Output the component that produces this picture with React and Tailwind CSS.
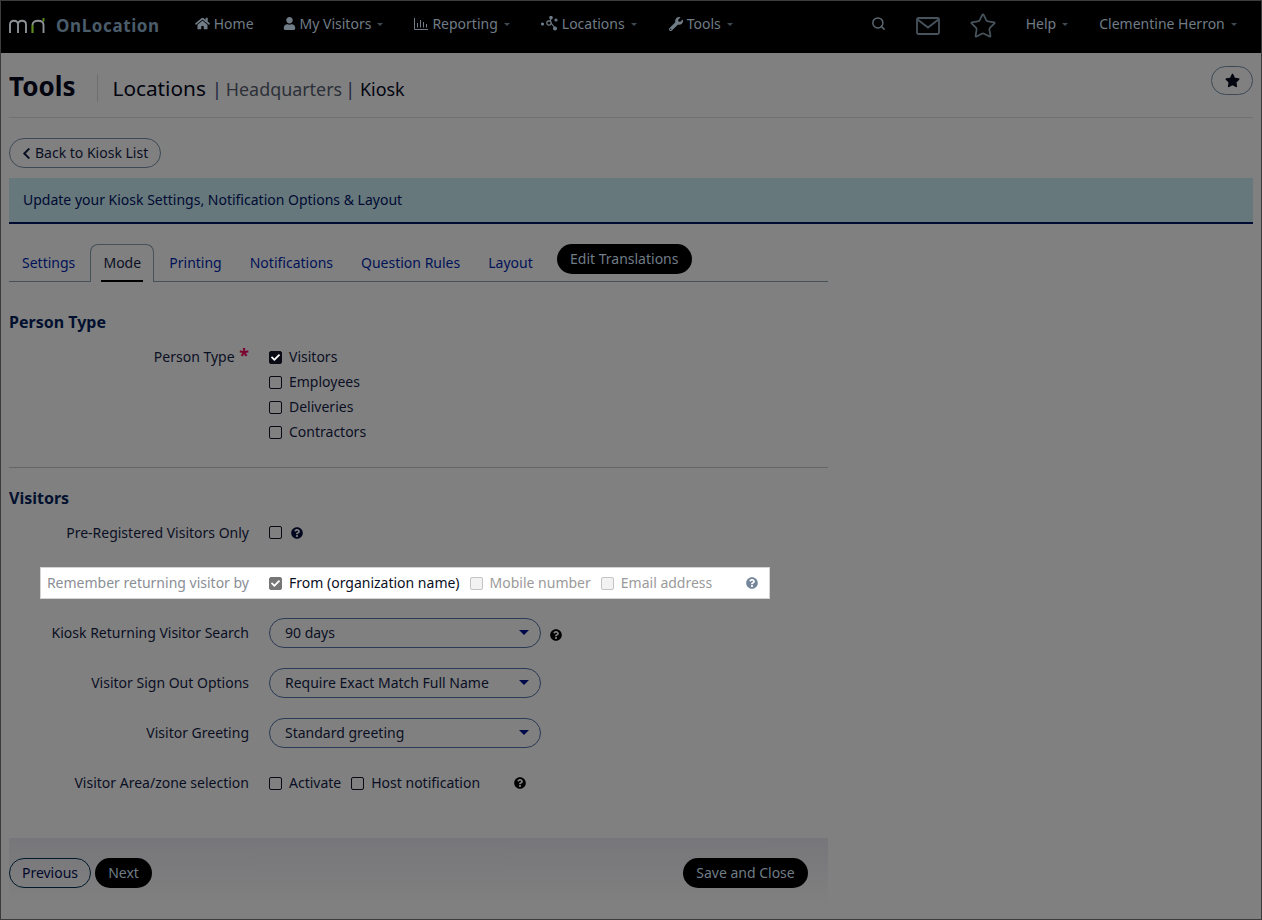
import { FaHome, FaUser, FaWrench, FaStar, FaQuestionCircle, FaChevronLeft, FaCheck } from 'react-icons/fa';
import { Search, Star } from 'lucide-react';

const Caret = () => (
  <span className="inline-block ml-[6px] mt-[2px] w-0 h-0 border-x-[3.5px] border-x-transparent border-t-[3.5px] border-t-[#3f4a53]" />
);

const MriLogo = () => (
  <svg width="37" height="16" viewBox="0 0 37 16" fill="none" strokeWidth="1.9" className="mb-[1px]">
    <path d="M1 15V6.5C1 4 2.5 2.8 5 2.8C7.5 2.8 9 4 9 6.5V15M9 6.5C9 4 10.5 2.8 13 2.8C15.5 2.8 17 4 17 6.5V15" stroke="#8c9195" />
    <path d="M23.5 15V7" stroke="#5f8a1e" strokeWidth="2.2" />
    <path d="M23.5 7C23.5 4 26 2.8 29 2.8C32 2.8 34.5 4 34.5 7V15" stroke="#8c9195" />
    <path d="M34.5 3.5V0" stroke="#5f8a1e" />
  </svg>
);

const LocationsIcon = () => (
  <svg width="17" height="15" viewBox="0 0 17 15" fill="none" stroke="#6f7c87" strokeWidth="1.2">
    <circle cx="1.5" cy="8" r="1" fill="#6f7c87" />
    <circle cx="8" cy="7" r="2.2" />
    <circle cx="10" cy="1.7" r="1.2" fill="#6f7c87" />
    <circle cx="15" cy="4" r="1" fill="#6f7c87" />
    <circle cx="14" cy="12.5" r="1.4" fill="#6f7c87" />
    <path d="M10 7L14 12M9 5L10 3" />
  </svg>
);

const ReportingIcon = () => (
  <svg width="14" height="12" viewBox="0 0 14 12" fill="none" stroke="#6f7c87" strokeWidth="1">
    <path d="M0.5 0V11.5H14" />
    <path d="M3.5 9.5V5M6.5 9.5V2M9.5 9.5V4M12.5 9.5V6" />
  </svg>
);

const MailIcon = () => (
  <svg width="24" height="18" viewBox="0 0 24 18" fill="none" stroke="#47535d" strokeWidth="1.8" className="ml-[30px]">
    <rect x="1" y="1" width="22" height="16" rx="1.5" />
    <path d="M1.5 2.5L12 10.5L22.5 2.5" />
  </svg>
);

const Check = ({ checked, muted }) => (
  <span className={`w-[13px] h-[13px] rounded-[2px] border flex items-center justify-center shrink-0 ${checked ? (muted ? 'bg-[#767676] border-[#767676]' : 'bg-[#0a0a14] border-[#0a0a14]') : muted ? 'bg-[#f2f2f2] border-[#c4c4c4]' : 'border-[#0a0a14]'}`}>
    {checked && <FaCheck size={9} className="text-white" />}
  </span>
);

const CheckOption = ({ label, checked, muted, dim }) => (
  <label className={`flex items-center gap-[7px] ${dim ? 'text-[#9a9a9a]' : 'text-[#0b0f24]'}`}>
    <Check checked={checked} muted={muted} />
    <span>{label}</span>
  </label>
);

const Help = ({ className = 'text-[#00071f]' }) => <FaQuestionCircle size={12} className={className} />;

const Row = ({ label, children, className = 'mb-[25px] h-[25px]' }) => (
  <div className={`flex items-center ${className}`}>
    <div className="w-[240px] text-right text-[#0b0f24] shrink-0">{label}</div>
    <div className="ml-[20px] flex items-center">{children}</div>
  </div>
);

const Select = ({ value }) => (
  <div className="w-[272px] h-[30px] rounded-[15px] border border-[#2b3a55] pl-[15px] pr-[11px] flex items-center justify-between text-[#0b0f24]">
    <span>{value}</span>
    <span className="w-0 h-0 mb-[2px] border-x-[5px] border-x-transparent border-t-[5px] border-t-[#00094a]" />
  </div>
);

const NavItem = ({ icon, label, caret, className = '' }) => (
  <div className={`flex items-center text-[#707c86] ${className}`}>
    {icon}
    <span className="ml-[4px]">{label}</span>
    {caret && <Caret />}
  </div>
);

export default function App() {
  return (
    <div className="w-[1262px] h-[920px] overflow-hidden bg-[#808080] border border-[#3c3c3c] text-[14px] leading-[20px] font-['Noto_Sans',sans-serif]">
      <nav className="h-[52px] pb-[2px] bg-black flex items-center pl-[8px]">
        <MriLogo />
        <span className="ml-[10px] text-[17px] font-bold tracking-[0.6px] text-[#4a5c6a]">OnLocation</span>
        <div className="ml-[35px] flex items-center mb-[5px]">
          <NavItem icon={<FaHome size={15} className="text-[#707c86]" />} label="Home" />
          <NavItem className="ml-[29px]" icon={<FaUser size={13} className="text-[#707c86]" />} label="My Visitors" caret />
          <NavItem className="ml-[31px]" icon={<ReportingIcon />} label="Reporting" caret />
          <NavItem className="ml-[31px]" icon={<LocationsIcon />} label="Locations" caret />
          <NavItem className="ml-[32px]" icon={<FaWrench size={14} className="text-[#707c86]" />} label="Tools" caret />
        </div>
        <div className="ml-[138px] flex items-center text-[#707c86]">
          <Search size={15} strokeWidth={2.4} className="text-[#5b6872] mb-[5px]" />
          <MailIcon />
          <Star size={28} strokeWidth={1.5} className="ml-[29px] text-[#47535d]" />
          <span className="ml-[29px] mb-[5px]">Help</span>
          <span className="mb-[5px] flex"><Caret /></span>
          <span className="ml-[31px] mb-[5px]">Clementine Herron</span>
          <span className="mb-[5px] flex"><Caret /></span>
        </div>
      </nav>

      <div className="pl-[8px] pr-[8px]">
        <header className="h-[65px] border-b border-[#717171] flex items-start relative">
          <div className="mt-[21px] pr-[22px] h-[28px] border-r border-[#6e6e6e] text-[26px] leading-[24px] font-bold text-[#02040f]">Tools</div>
          <div className="ml-[14px] mt-[20px] flex items-baseline text-[17.9px] leading-[30px]">
            <span className="text-[20.8px] text-[#02040f]">Locations</span>
            <span className="ml-[6px] mr-[4px] text-[#1a2440]">|</span>
            <span className="text-[#2c3038]">Headquarters</span>
            <span className="ml-[3px] mr-[5px] text-[#1a2440]">|</span>
            <span className="text-[#02040f]">Kiosk</span>
          </div>
          <button className="ml-auto mt-[13px] w-[42px] h-[29px] rounded-[15px] border border-[#3d4a55] flex items-center justify-center text-[#02040f]">
            <FaStar size={15} />
          </button>
        </header>

        <button className="mt-[20px] h-[30px] w-[152px] rounded-[15px] border border-[#3d4a55] pl-[10px] flex items-center text-[#0b0f24]">
          <FaChevronLeft size={13} className="mr-[2px]" />
          Back to Kiosk List
        </button>

        <div className="mt-[10px] h-[46px] bg-[#66787b] border-b-2 border-[#000a33] pl-[14px] pt-[12px] text-[#000a33]">
          Update your Kiosk Settings, Notification Options &amp; Layout
        </div>

        <div className="w-[819px]">
          <div className="mt-[20px] h-[38px] border-b border-[#465258] flex items-end text-[#001257]">
            <span className="ml-[13px] mb-[8px]">Settings</span>
            <div className="ml-[15px] w-[64px] h-[38px] -mb-[1px] rounded-t-[8px] border border-b-0 border-[#465258] bg-[#808080] flex flex-col items-center justify-end">
              <span className="text-[#0b0f24] mb-[7px]">Mode</span>
              <span className="w-[42px] h-[2px] bg-black" />
            </div>
            <span className="ml-[15px] mb-[8px]">Printing</span>
            <span className="ml-[28px] mb-[8px]">Notifications</span>
            <span className="ml-[28px] mb-[8px]">Question Rules</span>
            <span className="ml-[28px] mb-[8px]">Layout</span>
            <span className="ml-[24px] mb-[7px] h-[30px] w-[135px] rounded-[15px] bg-black text-[#707c86] flex items-center justify-center">Edit Translations</span>
          </div>

          <h2 className="mt-[29px] text-[16px] leading-[22px] font-bold text-[#02102f]">Person Type</h2>

          <div className="mt-[12px] flex border-b border-[#666] pb-[25px]">
            <div className="w-[240px] text-right text-[#0b0f24] shrink-0 pt-[2px]">
              Person Type <span className="text-[#7a0030] ml-[1px] text-[18px] leading-[14px] font-bold">*</span>
            </div>
            <div className="ml-[20px] flex flex-col gap-[5px] pt-[2px]">
              <CheckOption label="Visitors" checked />
              <CheckOption label="Employees" />
              <CheckOption label="Deliveries" />
              <CheckOption label="Contractors" />
            </div>
          </div>

          <h2 className="mt-[19px] text-[16px] leading-[22px] font-bold text-[#02102f]">Visitors</h2>

          <Row label="Pre-Registered Visitors Only" className="mt-[11px] h-[25px]">
            <Check />
            <Help className="ml-[9px] text-[#00071f]" />
          </Row>

          <div className="mt-[22px] ml-[31px] w-[730px] h-[32px] bg-white border border-[#d4d4d4] flex items-center">
            <div className="w-[208px] text-right text-[#8a8e96] shrink-0">Remember returning visitor by</div>
            <div className="ml-[20px] flex items-center gap-[10px]">
              <CheckOption label="From (organization name)" checked muted />
              <CheckOption label="Mobile number" muted dim />
              <CheckOption label="Email address" muted dim />
            </div>
            <Help className="ml-[34px] text-[#76869a]" />
          </div>

          <Row label="Kiosk Returning Visitor Search" className="mt-[19px] h-[30px]">
            <Select value="90 days" />
            <Help className="ml-[9px] mt-[4px]" />
          </Row>
          <Row label="Visitor Sign Out Options" className="mt-[20px] h-[30px]">
            <Select value="Require Exact Match Full Name" />
          </Row>
          <Row label="Visitor Greeting" className="mt-[20px] h-[30px]">
            <Select value="Standard greeting" />
          </Row>
          <Row label="Visitor Area/zone selection" className="mt-[20px] h-[30px]">
            <CheckOption label="Activate" />
            <div className="ml-[10px]"><CheckOption label="Host notification" /></div>
            <Help className="ml-[34px]" />
          </Row>

          <div className="mt-[40px] h-[67px] bg-gradient-to-b from-[#77777b] to-[#808080] pt-[20px] pr-[20px] flex items-start">
            <button className="h-[30px] w-[82px] rounded-[15px] border border-[#001a2c] text-[#02082a]">Previous</button>
            <button className="ml-[4px] h-[30px] w-[57px] rounded-[15px] bg-black text-[#707c86]">Next</button>
            <button className="ml-auto h-[30px] w-[125px] rounded-[15px] bg-black text-[#707c86]">Save and Close</button>
          </div>
        </div>
      </div>
    </div>
  );
}
